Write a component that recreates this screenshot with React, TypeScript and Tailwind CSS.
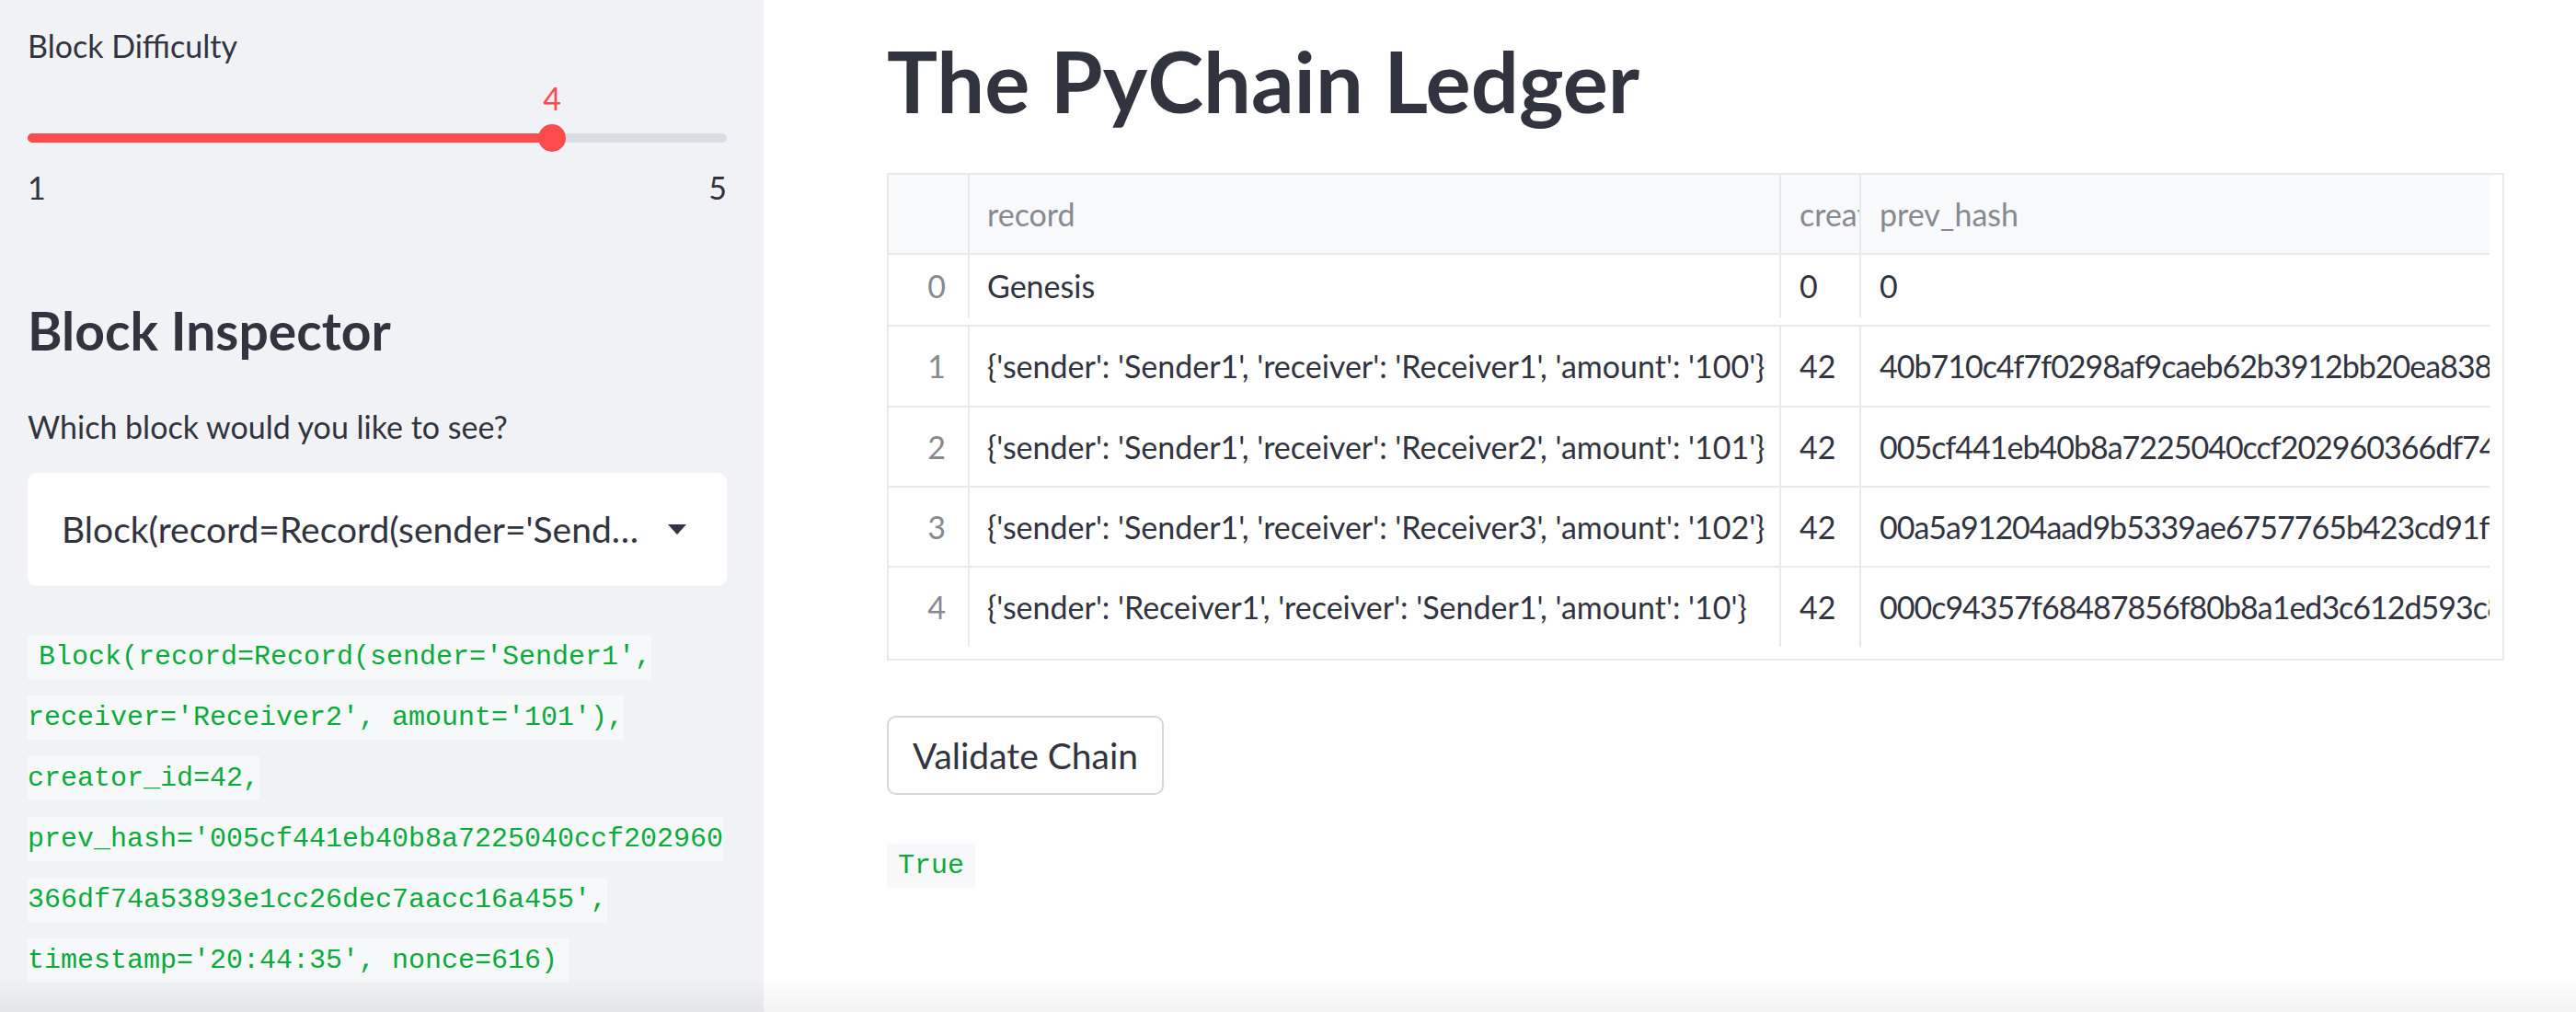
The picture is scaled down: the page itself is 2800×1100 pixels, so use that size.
import React from "react";

const sans = "font-['Lato','Noto_Sans',sans-serif]";
const mono = "font-['DejaVu_Sans_Mono','Liberation_Mono',monospace]";

const selected =
  "Block(record=Record(sender='Sender1', receiver='Receiver2', amount='101'), creator_id=42, prev_hash='005cf441eb40b8a7225040ccf202960366df74a53893e1cc26dec7aacc16a455', timestamp='20:44:35', nonce=616)";

const rows = [
  { idx: "0", record: "Genesis", creator: "0", hash: "0" },
  {
    idx: "1",
    record: "{'sender': 'Sender1', 'receiver': 'Receiver1', 'amount': '100'}",
    creator: "42",
    hash: "40b710c4f7f0298af9caeb62b3912bb20ea83854d1ffb2f3e4c3a2d5b6e7f80",
  },
  {
    idx: "2",
    record: "{'sender': 'Sender1', 'receiver': 'Receiver2', 'amount': '101'}",
    creator: "42",
    hash: "005cf441eb40b8a7225040ccf202960366df74a53893e1cc26dec7aacc16a455",
  },
  {
    idx: "3",
    record: "{'sender': 'Sender1', 'receiver': 'Receiver3', 'amount': '102'}",
    creator: "42",
    hash: "00a5a91204aad9b5339ae6757765b423cd91f68e2b7a04c19d3e5f6a7b8c9d01",
  },
  {
    idx: "4",
    record: "{'sender': 'Receiver1', 'receiver': 'Sender1', 'amount': '10'}",
    creator: "42",
    hash: "000c94357f68487856f80b8a1ed3c612d593c86a1b2c3d4e5f60718293a4b5c6",
  },
];

function Slider() {
  // value 4 on a 1..5 range
  const pct = ((4 - 1) / (5 - 1)) * 100;
  return (
    <div>
      <div className="relative mt-[23px] h-[34px] text-[34px] leading-[34px] text-[#ff4b4b]">
        <span className="absolute -translate-x-1/2" style={{ left: `${pct}%` }}>
          4
        </span>
      </div>
      <div className="relative mt-[11px] flex h-[30px] items-center">
        <div className="h-[10px] w-full rounded-full bg-[#d9dce4]">
          <div className="h-full rounded-full bg-[#ff4b4b]" style={{ width: `${pct}%` }} />
        </div>
        <div
          className="absolute top-0 h-[30px] w-[30px] -translate-x-1/2 rounded-full bg-[#ff4b4b]"
          style={{ left: `${pct}%` }}
        />
      </div>
      <div className="mt-[22px] flex justify-between text-[34px] leading-[34px]">
        <span>1</span>
        <span>5</span>
      </div>
    </div>
  );
}

function Sidebar() {
  return (
    <aside className={`w-[830px] shrink-0 bg-[#f0f2f6] pl-[30px] pr-[40px] text-[#31333f] ${sans}`}>
      <div className="mt-[33px] text-[34px] leading-[34px]">Block Difficulty</div>
      <Slider />

      <h2 className="mt-[110px] text-[57px] font-bold leading-[57px]">Block Inspector</h2>
      <p className="mt-[59px] text-[34px] leading-[34px]">Which block would you like to see?</p>

      <div className="mt-[33px] flex h-[123px] items-center rounded-[10px] bg-white pl-[37px] pr-[44px]">
        <span className="min-w-0 flex-1 truncate text-[39px] leading-[39px]">{selected}</span>
        <svg className="ml-[30px] shrink-0" width="20" height="11" viewBox="0 0 20 11">
          <path d="M0 0h20L10 11z" fill="#31333f" />
        </svg>
      </div>

      <p className={`mt-[43px] break-words text-[30px] leading-[64px] text-[#09ab3b] ${mono}`}>
        <code className="bg-[#f7f8fa] px-[12px] py-[7px]">{selected}</code>
      </p>
    </aside>
  );
}

function Ledger() {
  const last = rows.length - 1;
  return (
    <div className="mt-[55px] flex h-[530px] w-[1758px] border-2 border-[#e7e9ed]">
      <div className="w-[1740px]">
        <div className="grid h-[87px] grid-cols-[88px_882px_87px_683px] border-b-2 border-[#e7e9ed] bg-[#f8f9fb] text-[#878991]">
          <div className="border-r-2 border-[#e7e9ed]" />
          <div className="flex items-center overflow-hidden whitespace-nowrap border-r-2 border-[#e7e9ed] pl-[19px]">record</div>
          <div className="flex items-center overflow-hidden whitespace-nowrap border-r-2 border-[#e7e9ed] pl-[20px]">creator_id</div>
          <div className="flex items-center overflow-hidden whitespace-nowrap pl-[20px]">prev_hash</div>
        </div>
        {rows.map((r, i) => (
          <div
            key={r.idx}
            className={`grid grid-cols-[88px_882px_87px_683px] border-[#e7e9ed] ${
              i === 0
                ? "h-[78px] border-b-2 pb-[8px]"
                : i === last
                  ? "h-[86px]"
                  : i === 1
                    ? "h-[88px] border-b-2"
                    : "h-[87px] border-b-2"
            }`}
          >
            <div className="flex items-center justify-end border-r-2 border-[#e7e9ed] pr-[24px] text-[#878991]">{r.idx}</div>
            <div className="flex items-center overflow-hidden whitespace-nowrap border-r-2 border-[#e7e9ed] pl-[19px]">{r.record}</div>
            <div className="flex items-center overflow-hidden whitespace-nowrap border-r-2 border-[#e7e9ed] pl-[20px]">{r.creator}</div>
            <div className="flex items-center overflow-hidden whitespace-nowrap pl-[20px] tracking-[-1px]">{r.hash}</div>
          </div>
        ))}
      </div>
      <div className="flex-1" />
    </div>
  );
}

export default function App() {
  return (
    <div className="relative flex h-[1100px] w-[2800px] overflow-hidden bg-white">
      <Sidebar />
      <main className={`flex-1 pl-[134px] pt-[43px] text-[#31333f] ${sans}`}>
        <h1 className="text-[92px] font-bold leading-[90px]">The PyChain Ledger</h1>

        <div className="text-[34px] leading-[34px]">
          <Ledger />
        </div>

        <button className="mt-[60px] flex h-[86px] w-[301px] items-center justify-center rounded-[10px] border-2 border-[#d6d7da] bg-white text-[39px] leading-[39px] text-[#31333f]">
          Validate Chain
        </button>

        <p className={`mt-[43px] text-[30px] leading-[64px] text-[#09ab3b] ${mono}`}>
          <code className="bg-[#f7f8fa] px-[12px] py-[7px]">True</code>
        </p>
      </main>
      <div className="pointer-events-none absolute inset-x-0 bottom-0 h-[40px] bg-linear-to-b from-transparent to-[rgba(0,0,0,0.05)]" />
    </div>
  );
}
